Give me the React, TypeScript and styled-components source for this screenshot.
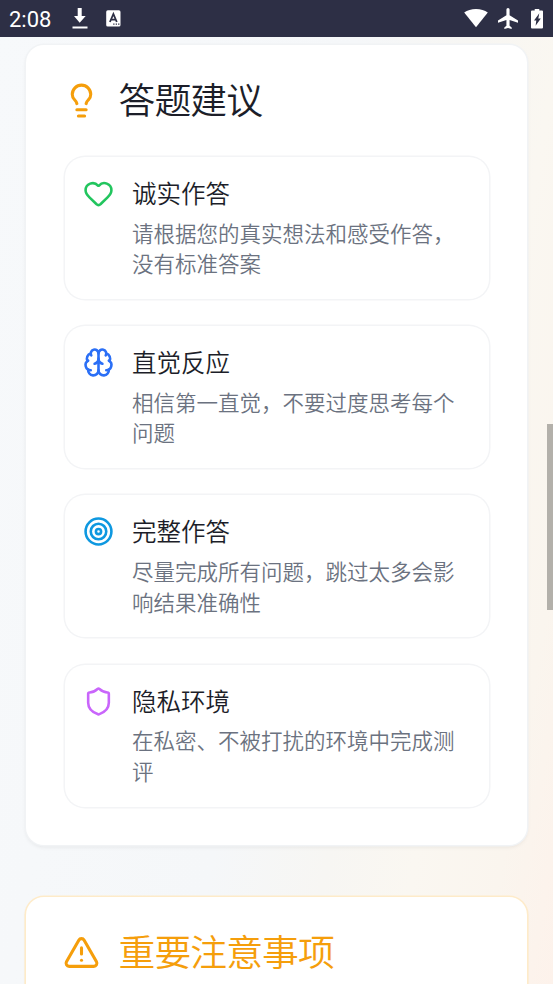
import React from 'react';
import styled, { createGlobalStyle } from 'styled-components';
import { Brain, Heart, Lightbulb, Shield, Target, TriangleAlert } from 'lucide-react';

const GlobalStyle = createGlobalStyle`
  * { box-sizing: border-box; }
  body {
    margin: 0;
    overflow: hidden;
    font-family: Roboto, "Noto Sans CJK SC", sans-serif;
  }
`;

const Screen = styled.div`
  position: relative;
  display: flex;
  flex-direction: column;
  width: 553px;
  height: 984px;
  overflow: hidden;
  background: linear-gradient(100deg, #f7f9fb 0%, #f5f7f9 50%, #f7f6f3 66%, #faf7f1 78%, #faf5ee 90%, #fdf2eb 100%);
`;

const StatusBar = styled.header`
  display: flex;
  flex: none;
  align-items: center;
  justify-content: space-between;
  height: 37px;
  padding: 0 10px 0 9px;
  background: #2d2f45;
  color: #fff;
`;

const StatusGroup = styled.div<{ $gap: number }>`
  display: flex;
  align-items: center;
  gap: ${(p) => p.$gap}px;
  svg { display: block; }
`;

const Clock = styled.span`
  width: 44px;
  font: 450 22px/37px Roboto, sans-serif;
  padding-top: 1px;
`;

const Content = styled.main`
  display: flex;
  flex-direction: column;
  gap: 52px;
  padding: 8px 26px 0;
`;

const Card = styled.section<{ $warning?: boolean }>`
  flex: none;
  height: 800px;
  padding: 37.5px 38px 0 37px;
  border-radius: 18px;
  background: #fff;
  box-shadow: ${(p) =>
    p.$warning
      ? '0 0 0 1.6px #feebc9, 0 2px 4px rgba(0, 0, 0, 0.06)'
      : '0 0 0 1.5px #f1f3f5, 0 2px 4px rgba(0, 0, 0, 0.08)'};
`;

const CardTitle = styled.h2<{ $color: string }>`
  display: flex;
  align-items: center;
  gap: 18.5px;
  height: 37px;
  margin: 0 0 37.5px;
  color: ${(p) => p.$color};
  font-size: 36.8px;
  font-weight: 350;
  line-height: 37px;
  letter-spacing: -0.92px;
  white-space: nowrap;
  svg { flex: none; margin-bottom: 2px; color: #f59e0b; }
`;

const TipList = styled.div`
  display: flex;
  flex-direction: column;
  gap: 27.2px;
  margin-left: 1.5px;
`;

const Tip = styled.article`
  display: flex;
  gap: 18.5px;
  height: 142px;
  padding: 19px 18px 0 18px;
  border-radius: 20px;
  box-shadow: 0 0 0 1.5px #f3f4f6;
`;

const TipIcon = styled.span<{ $color: string }>`
  flex: none;
  height: 31px;
  margin-top: 2px;
  color: ${(p) => p.$color};
  svg { display: block; }
`;

const TipTitle = styled.h3`
  margin: 0;
  color: #1c1e29;
  font-size: 24.5px;
  font-weight: 350;
  line-height: 37px;
`;

const TipText = styled.p`
  width: 325px;
  margin: 6.5px 0 0;
  color: #6b7280;
  font-size: 21.5px;
  font-weight: 350;
  line-height: 30.7px;
`;

const ScrollThumb = styled.div`
  position: absolute;
  top: 424px;
  right: 0;
  width: 6px;
  height: 186px;
  background: #b3b0aa;
`;

const tips = [
  { icon: Heart, color: '#22c55e', title: '诚实作答', text: '请根据您的真实想法和感受作答，没有标准答案' },
  { icon: Brain, color: '#2b6ff6', title: '直觉反应', text: '相信第一直觉，不要过度思考每个问题' },
  { icon: Target, color: '#0e98e0', title: '完整作答', text: '尽量完成所有问题，跳过太多会影响结果准确性' },
  { icon: Shield, color: '#c965fb', title: '隐私环境', text: '在私密、不被打扰的环境中完成测评' },
];

const DownloadIcon = () => (
  <svg width="16" height="22" viewBox="0 0 16 22" fill="currentColor">
    <path d="M5.7 0h4v8h4L7.7 14.8 2 8h3.7zM.5 18.500h15v2H.5z" />
  </svg>
);

const InputIcon = () => (
  <svg width="15" height="17" viewBox="0 0 15 17">
    <rect x="0.2" y="0.3" width="14.3" height="16.2" rx="1.6" fill="#fff" />
    <path d="M3.9 12 7.4 4l3.4 8M5.2 9.6h4.4" fill="none" stroke="#2d2f45" strokeWidth="1.8" />
    <path d="M7.2 13.5h1.3v1.3H7.2zM9.7 13.5H11v1.3H9.7zM12.1 13.5h1.3v1.3h-1.3z" fill="#2d2f45" />
  </svg>
);

const WifiIcon = () => (
  <svg width="24" height="20" viewBox="0 0 24 20" fill="currentColor">
    <path d="M.2 3.600C3.300 1.300 7.300.1 12 .1s8.700 1.200 11.800 3.500L12 18.200z" />
  </svg>
);

const PlaneIcon = () => (
  <svg width="20" height="21" viewBox="2 2 19 20" preserveAspectRatio="none" fill="currentColor">
    <path d="M21 16v-2l-8-5V3.500a1.500 1.500 0 0 0-3 0V9l-8 5v2l8-2.500V19l-2 1.500V22l3.500-1 3.500 1v-1.500L13 19v-5.500z" />
  </svg>
);

const BatteryIcon = () => (
  <svg width="15" height="20" viewBox="-3 0.500 15 20">
    <path d="M3.700 0h4.600v2H11q1 0 1 1v16q0 1-1 1H1q-1 0-1-1V3q0-1 1-1h2.700z" fill="#fff" />
    <path d="M8.300 4.800 3 12h2.300l-.7 5.300L9.800 10H7.300z" fill="#2d2f45" />
  </svg>
);

export default function App() {
  return (
    <Screen>
      <GlobalStyle />
      <StatusBar>
        <StatusGroup $gap={18.5}>
          <Clock>2:08</Clock>
          <DownloadIcon />
          <InputIcon />
        </StatusGroup>
        <StatusGroup $gap={10}>
          <WifiIcon />
          <PlaneIcon />
          <BatteryIcon />
        </StatusGroup>
      </StatusBar>
      <Content>
        <Card>
          <CardTitle $color="#1c1e29">
            <Lightbulb size={37} />
            答题建议
          </CardTitle>
          <TipList>
            {tips.map(({ icon: Icon, color, title, text }) => (
              <Tip key={title}>
                <TipIcon $color={color}>
                  <Icon size={31} />
                </TipIcon>
                <div>
                  <TipTitle>{title}</TipTitle>
                  <TipText>{text}</TipText>
                </div>
              </Tip>
            ))}
          </TipList>
        </Card>
        <Card $warning>
          <CardTitle $color="#f59e0b">
            <TriangleAlert size={37} />
            重要注意事项
          </CardTitle>
        </Card>
      </Content>
      <ScrollThumb />
    </Screen>
  );
}
